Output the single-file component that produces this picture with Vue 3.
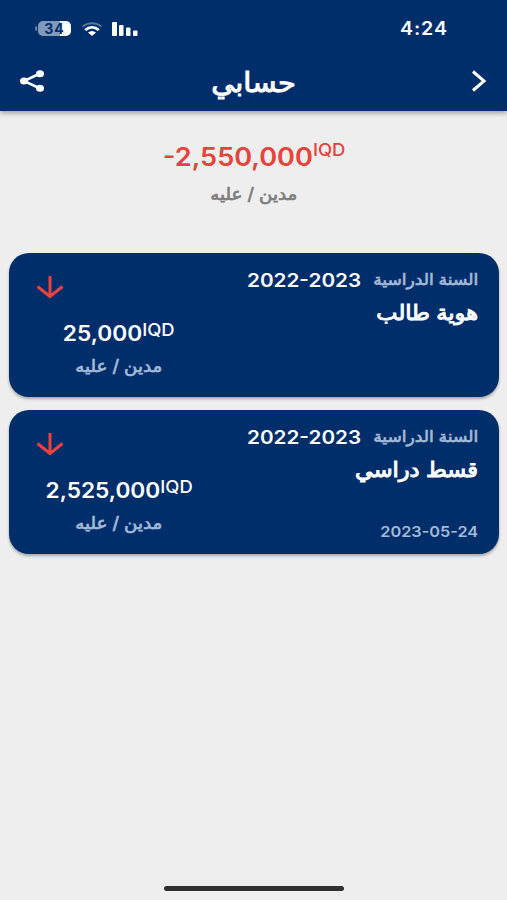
<template>
  <div class="screen" dir="rtl">
    <header class="header">
      <!-- Status bar -->
      <div class="status-bar" dir="ltr">
        <div class="indicators">
          <div class="battery">
            <span class="battery-tip"></span>
            <span class="battery-body">34</span>
          </div>
          <svg class="wifi" width="22" height="14" viewBox="0 0 22 14">
            <path d="M1.500 4.600C7 .1 15 .1 20.500 4.600" fill="none" stroke="#55779f" stroke-width="1.800" />
            <path d="M4.200 8C8.300 4.400 13.700 4.400 17.800 8" fill="none" stroke="#fff" stroke-width="2.800" />
            <path d="M7 10.600Q11 7.400 15 10.600L11 14Z" fill="#fff" />
          </svg>
          <svg class="signal" width="27" height="14" viewBox="0 0 27 14">
            <rect x="0" y="0" width="5" height="14" rx="1" fill="#fff" />
            <rect x="7" y="3" width="4.500" height="11" rx="1" fill="#fff" />
            <rect x="14" y="5.500" width="4.500" height="8.500" rx="1" fill="#fff" />
            <rect x="21" y="8.500" width="4.500" height="5.500" rx="1" fill="#fff" />
          </svg>
        </div>
        <span class="clock">4:24</span>
      </div>

      <!-- Title bar -->
      <div class="title-bar">
        <svg class="back" width="16" height="22" viewBox="0 0 16 22">
          <path d="M2 1.500L13 11L2 20.500" fill="none" stroke="#fff" stroke-width="3" />
        </svg>
        <h1 class="title">حسابي</h1>
        <svg class="share" width="24" height="22" viewBox="0 0 24 22">
          <path d="M20 3.500L4 11L20 18.500" fill="none" stroke="#fff" stroke-width="2.500" />
          <ellipse cx="20" cy="3.700" rx="4" ry="3.500" fill="#fff" />
          <ellipse cx="4" cy="11" rx="4" ry="3.500" fill="#fff" />
          <ellipse cx="20" cy="18.300" rx="4" ry="3.500" fill="#fff" />
        </svg>
      </div>
    </header>

    <!-- Balance -->
    <section class="balance">
      <div class="balance-amount" dir="ltr">
        <span>{{ balance }}</span><span class="currency">IQD</span>
      </div>
      <p class="state">مدين / عليه</p>
    </section>

    <!-- Entries -->
    <main class="entries">
      <article v-for="entry in entries" :key="entry.title" class="card">
        <div class="details">
          <div class="year-row">
            <span class="year-label">السنة الدراسية</span>
            <span class="year" dir="ltr">{{ entry.year }}</span>
          </div>
          <h2 class="card-title">{{ entry.title }}</h2>
          <time v-if="entry.date" class="date" dir="ltr">{{ entry.date }}</time>
        </div>
        <div class="amount-side">
          <svg class="arrow" width="28" height="24" viewBox="0 0 28 24">
            <path d="M14 1V21M1.500 11.500L14 21.500L26.500 11.500" fill="none" stroke="#e8433f" stroke-width="3" />
          </svg>
          <div class="amount" dir="ltr">
            <span>{{ entry.amount }}</span><span class="currency">IQD</span>
          </div>
          <p class="state">مدين / عليه</p>
        </div>
      </article>
    </main>

    <div class="home-indicator"></div>
  </div>
</template>

<script setup>
const balance = '-2,550,000'

const entries = [
  { year: '2022-2023', title: 'هوية طالب', amount: '25,000', date: '' },
  { year: '2022-2023', title: 'قسط دراسي', amount: '2,525,000', date: '2023-05-24' }
]
</script>

<style>
body {
  margin: 0;
  background: #eee;
}
</style>

<style scoped>
.screen {
  display: flex;
  flex-direction: column;
  width: 507px;
  height: 900px;
  background: #eee;
  font-family: Inter, 'DejaVu Sans', sans-serif;
  overflow: hidden;
}

.header {
  box-sizing: border-box;
  height: 111px;
  background: #002e6b;
  color: #fff;
  box-shadow: 0 2px 5px rgba(0, 0, 0, 0.35);
}

.status-bar {
  display: flex;
  align-items: center;
  justify-content: space-between;
  height: 57px;
  padding: 0 59px 0 35px;
}

.indicators {
  display: flex;
  align-items: center;
}

.battery {
  display: flex;
  align-items: center;
}

.battery-tip {
  width: 2px;
  height: 5px;
  margin-right: 1px;
  border-radius: 2px 0 0 2px;
  background: #6b88ae;
}

.battery-body {
  width: 33px;
  height: 15px;
  border-radius: 5px;
  background: linear-gradient(to right, #809abc 66%, #fff 66%);
  color: #002e6b;
  font-size: 14px;
  font-weight: 700;
  line-height: 15px;
  letter-spacing: 1px;
  text-align: center;
}

.wifi {
  margin-left: 10px;
}

.signal {
  margin-left: 9px;
}

.clock {
  font-size: 18px;
  font-weight: 600;
  letter-spacing: 0.8px;
  transform: scaleX(1.09);
  transform-origin: right;
}

.title-bar {
  display: flex;
  align-items: center;
  justify-content: space-between;
  height: 48px;
  padding: 0 20px;
}

/* Arabic text: regular cut, thickened and widened a little */
.title,
.card-title,
.year-label,
.state {
  font-weight: 400;
  -webkit-text-stroke: 0.7px currentColor;
  transform: scaleX(1.07);
}

.title {
  margin: 0 7px 0 0;
  padding-top: 3px;
  font-size: 27px;
  line-height: 45px;
  -webkit-text-stroke-width: 1px;
}

.balance {
  display: flex;
  flex-direction: column;
  align-items: center;
  height: 142px;
  padding: 29px 0 0 1px;
  box-sizing: border-box;
}

.balance-amount {
  display: flex;
  height: 34px;
  color: #e8433a;
  font-size: 25px;
  font-weight: 600;
  line-height: 35px;
  transform: scaleX(1.085);
}

.balance-amount .currency {
  font-size: 17px;
  font-weight: 500;
  line-height: 20px;
}

.state {
  margin: 0;
  color: #7d7d7d;
  font-size: 17px;
  line-height: 24px;
}

.balance .state {
  margin-top: 8px;
}

.entries {
  display: flex;
  flex-direction: column;
  gap: 13px;
  padding: 0 8px 0 9px;
}

.card {
  display: flex;
  justify-content: space-between;
  box-sizing: border-box;
  height: 144px;
  border-radius: 20px;
  background: #002e6b;
  color: #fff;
  box-shadow: 0 2px 3px rgba(0, 0, 0, 0.3);
}

.details {
  display: flex;
  flex-direction: column;
  align-items: flex-start;
  padding: 14px 21px 0 0;
}

.year-row {
  display: flex;
  justify-content: space-between;
  width: 231px;
  height: 26px;
  line-height: 27px;
}

.year-label {
  color: #a3b9d8;
  font-size: 16px;
  line-height: 24px;
  transform-origin: right;
}

.year {
  font-size: 19px;
  font-weight: 600;
  transform: scaleX(1.09);
  transform-origin: left;
}

.card-title {
  margin: 4px 0 0;
  font-size: 21px;
  line-height: 32px;
  -webkit-text-stroke-width: 1px;
  transform-origin: right;
}

.date {
  margin-top: 35px;
  color: #a3b9d8;
  font-size: 15px;
  font-weight: 600;
  line-height: 22px;
  transform: scaleX(1.085);
  transform-origin: right;
}

.amount-side {
  display: flex;
  flex-direction: column;
  align-items: center;
  width: 220px;
  padding-top: 22px;
}

.arrow {
  align-self: flex-end;
  margin-left: 27px;
}

.amount {
  display: flex;
  margin-top: 20px;
  height: 30px;
  font-size: 21px;
  font-weight: 600;
  line-height: 30px;
  transform: scaleX(1.08);
}

.amount .currency {
  font-size: 17px;
  font-weight: 500;
  line-height: 22px;
}

.card .state {
  margin-top: 5px;
  color: #a3b9d8;
}

.home-indicator {
  width: 180px;
  height: 5px;
  margin: auto auto 9px;
  border-radius: 3px;
  background: #303030;
}
</style>
